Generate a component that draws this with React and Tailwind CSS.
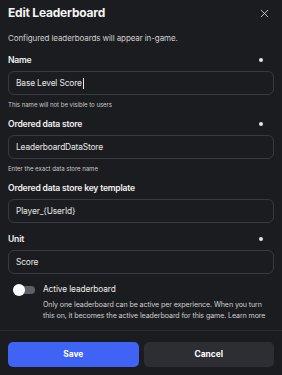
import { X } from "lucide-react"

function Field({ label, value, required, hint, caret, top }) {
  return (
    <div className={top}>
      <div className="flex items-center justify-between pr-[11px]">
        <p className="text-[8.6px] font-semibold leading-[14px] tracking-[-0.2px] text-[#f2f2f2]">{label}</p>
        {required && <span className="h-[4px] w-[4px] rounded-full bg-[#e6e6e6]"></span>}
      </div>
      <div className="mt-[4px] flex h-[24px] items-center rounded-[6px] border border-[#383a40] bg-[#1b1c20] px-[7px] text-[8.4px] tracking-[-0.15px] text-[#e8e8e8]">
        {value}
        {caret && <span className="ml-[1px] h-[11px] w-[1px] bg-[#e8e8e8]"></span>}
      </div>
      {hint && <p className="mt-[5px] text-[6.1px] leading-[9px] tracking-[-0.05px] text-[#c8c8c8]">{hint}</p>}
    </div>
  )
}

function App() {
  return (
    <div className="h-[375px] w-[282px] overflow-hidden bg-[#1b1c20] font-['Inter',sans-serif] text-white">
      <div className="px-[8px] pt-[4px]">
        {/*---header---- */}
        <div className="flex items-center justify-between">
          <h1 className="text-[12px] font-bold leading-[18px] tracking-[-0.2px] text-[#f5f5f5]">Edit Leaderboard</h1>
          <X size={13} strokeWidth={1.5} className="mr-[3px] text-[#e0e0e0]" />
        </div>
        <p className="mt-[10px] text-[8px] leading-[12px] tracking-[-0.1px] text-[#cfcfcf]">Configured leaderboards will appear in-game.</p>

        <Field top="mt-[9px]" label="Name" value="Base Level Score" required caret hint="This name will not be visible to users" />
        <Field top="mt-[8px]" label="Ordered data store" value="LeaderboardDataStore" required hint="Enter the exact data store name" />
        <Field top="mt-[8px]" label="Ordered data store key template" value="Player_{UserId}" />
        <Field top="mt-[9px]" label="Unit" value="Score" required />

        {/*---toggle---- */}
        <div className="mt-[9px] flex gap-[8px] pl-[5px]">
          <div className="relative mt-[3px] h-[8px] w-[22px] shrink-0 rounded-full bg-[#5f6065]">
            <span className="absolute left-0 top-[-2px] h-[12px] w-[12px] rounded-full bg-white"></span>
          </div>
          <div className="pr-[8px]">
            <p className="text-[8.3px] leading-[13px] tracking-[-0.1px] text-[#eeeeee]">Active leaderboard</p>
            <p className="mt-[3px] text-[7.1px] leading-[11px] tracking-[-0.1px] text-[#d0d0d0]">
              Only one leaderboard can be active per experience. When you turn this on, it becomes the active leaderboard for this game. Learn more
            </p>
          </div>
        </div>
      </div>

      {/*---footer---- */}
      <div className="mt-[9px] border-t border-[#2b2c31] px-[8px] pt-[11px]">
        <div className="flex gap-[5px]">
          <button className="h-[25px] flex-1 rounded-[5px] bg-[#3e63f5] text-[8.4px] font-bold text-white">Save</button>
          <button className="h-[25px] flex-1 rounded-[5px] bg-[#2d2e33] text-[8.4px] font-bold text-white">Cancel</button>
        </div>
      </div>
    </div>
  )
}

export default App
